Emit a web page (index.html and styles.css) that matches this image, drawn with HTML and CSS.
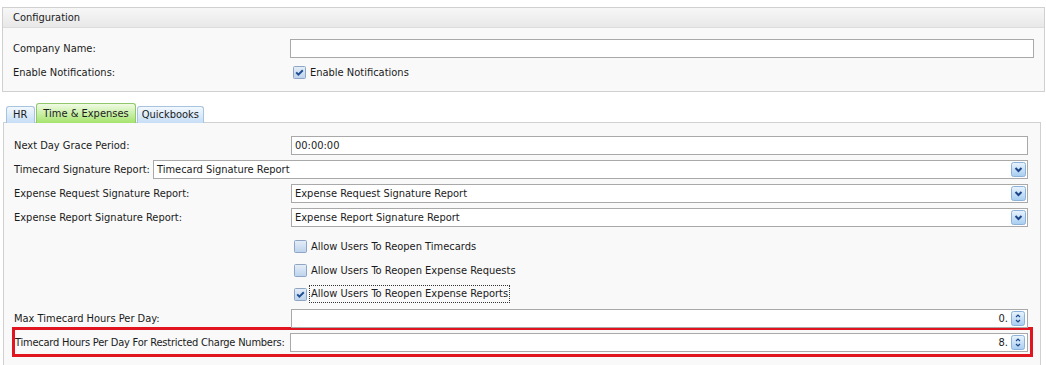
FILE: index.html
```html
<!DOCTYPE html>
<html lang="en">
<head>
    <meta charset="UTF-8">
    <title>Configuration</title>
    <link rel="stylesheet" href="styles.css">
</head>
<body>
    <div class="panel config">
        <div class="panel-header">Configuration</div>
        <div class="panel-body">
            <div class="form-row">
                <label>Company Name:</label>
                <div class="text-input"></div>
            </div>
            <div class="form-row">
                <label>Enable Notifications:</label>
                <div class="check">
                    <svg class="checkbox" width="13" height="13" viewBox="0 0 13 13">
                        <defs>
                            <linearGradient id="cbg" x1="0" y1="0" x2="0" y2="1">
                                <stop offset="0" stop-color="#e6eef8"/>
                                <stop offset="1" stop-color="#bcd2ec"/>
                            </linearGradient>
                        </defs>
                        <rect x="0.5" y="0.5" width="12" height="12" rx="1" fill="url(#cbg)" stroke="#8ea6c4"/>
                        <path d="M3.2 6.4 L5.4 8.6 L9.8 4.2" fill="none" stroke="#1f4f93" stroke-width="2"/>
                    </svg>
                    <span>Enable Notifications</span>
                </div>
            </div>
        </div>
    </div>

    <div class="tabs">
        <div class="tab hr">HR</div>
        <div class="tab active">Time &amp; Expenses</div>
        <div class="tab qb">Quickbooks</div>
    </div>

    <div class="panel tab-panel">
        <div class="form-row">
            <label>Next Day Grace Period:</label>
            <div class="text-input">00:00:00</div>
        </div>
        <div class="form-row short">
            <label>Timecard Signature Report:</label>
            <div class="text-input select">
                <span>Timecard Signature Report</span>
                <svg class="drop-btn" width="15" height="15" viewBox="0 0 15 15">
                    <defs>
                        <linearGradient id="dbg" x1="0" y1="0" x2="0" y2="1">
                            <stop offset="0" stop-color="#eaf4fd"/>
                            <stop offset="1" stop-color="#a7cdf1"/>
                        </linearGradient>
                    </defs>
                    <rect x="0.5" y="0.5" width="14" height="14" rx="2" fill="url(#dbg)" stroke="#8cb2da"/>
                    <path d="M4.5 6 L7.5 9 L10.5 6" fill="none" stroke="#1d4688" stroke-width="2"/>
                </svg>
            </div>
        </div>
        <div class="form-row">
            <label>Expense Request Signature Report:</label>
            <div class="text-input select">
                <span>Expense Request Signature Report</span>
                <svg class="drop-btn" width="15" height="15" viewBox="0 0 15 15">
                    <rect x="0.5" y="0.5" width="14" height="14" rx="2" fill="url(#dbg)" stroke="#8cb2da"/>
                    <path d="M4.5 6 L7.5 9 L10.5 6" fill="none" stroke="#1d4688" stroke-width="2"/>
                </svg>
            </div>
        </div>
        <div class="form-row">
            <label>Expense Report Signature Report:</label>
            <div class="text-input select">
                <span>Expense Report Signature Report</span>
                <svg class="drop-btn" width="15" height="15" viewBox="0 0 15 15">
                    <rect x="0.5" y="0.5" width="14" height="14" rx="2" fill="url(#dbg)" stroke="#8cb2da"/>
                    <path d="M4.5 6 L7.5 9 L10.5 6" fill="none" stroke="#1d4688" stroke-width="2"/>
                </svg>
            </div>
        </div>

        <div class="check-group">
            <div class="form-row">
                <label></label>
                <div class="check">
                    <svg class="checkbox" width="13" height="13" viewBox="0 0 13 13">
                        <rect x="0.5" y="0.5" width="12" height="12" rx="1" fill="url(#cbg)" stroke="#8ea6c4"/>
                    </svg>
                    <span>Allow Users To Reopen Timecards</span>
                </div>
            </div>
            <div class="form-row">
                <label></label>
                <div class="check">
                    <svg class="checkbox" width="13" height="13" viewBox="0 0 13 13">
                        <rect x="0.5" y="0.5" width="12" height="12" rx="1" fill="url(#cbg)" stroke="#8ea6c4"/>
                    </svg>
                    <span>Allow Users To Reopen Expense Requests</span>
                </div>
            </div>
            <div class="form-row">
                <label></label>
                <div class="check">
                    <svg class="checkbox" width="13" height="13" viewBox="0 0 13 13">
                        <rect x="0.5" y="0.5" width="12" height="12" rx="1" fill="url(#cbg)" stroke="#8ea6c4"/>
                        <path d="M3.2 6.4 L5.4 8.6 L9.8 4.2" fill="none" stroke="#1f4f93" stroke-width="2"/>
                    </svg>
                    <span class="focused">Allow Users To Reopen Expense Reports</span>
                </div>
            </div>
        </div>

        <div class="form-row">
            <label>Max Timecard Hours Per Day:</label>
            <div class="text-input number">
                <span>0.</span>
                <svg class="spin-btn" width="14" height="15" viewBox="0 0 14 15">
                    <defs>
                        <linearGradient id="sbg" x1="0" y1="0" x2="0" y2="1">
                            <stop offset="0" stop-color="#eaf4fd"/>
                            <stop offset="1" stop-color="#a7cdf1"/>
                        </linearGradient>
                    </defs>
                    <rect x="0.5" y="0.5" width="13" height="14" rx="2" fill="url(#sbg)" stroke="#8cb2da"/>
                    <path d="M5 6 L7 4 L9 6 M5 9 L7 11 L9 9" fill="none" stroke="#1d4688" stroke-width="1.2"/>
                </svg>
            </div>
        </div>
        <div class="highlight">
            <div class="form-row">
                <label>Timecard Hours Per Day For Restricted Charge Numbers:</label>
                <div class="text-input number">
                    <span>8.</span>
                    <svg class="spin-btn" width="14" height="15" viewBox="0 0 14 15">
                        <rect x="0.5" y="0.5" width="13" height="14" rx="2" fill="url(#sbg)" stroke="#8cb2da"/>
                        <path d="M5 6 L7 4 L9 6 M5 9 L7 11 L9 9" fill="none" stroke="#1d4688" stroke-width="1.2"/>
                    </svg>
                </div>
            </div>
        </div>
    </div>
</body>
</html>
```

FILE: styles.css
```css
body {
    margin: 0;
    background: #ffffff;
    font-family: "DejaVu Sans Condensed", "DejaVu Sans", Tahoma, sans-serif;
    font-stretch: condensed;
    font-size: 11px;
    color: #1b1b1b;
    height: 365px;
    overflow: hidden;
}
.panel {
    border: 1px solid #d0d0d0;
    background: #f9f9f9;
}
.config {
    margin: 7px 1px 0 2px;
}
.panel-header {
    height: 19px;
    line-height: 19px;
    padding-left: 10px;
    background: linear-gradient(#f7f7f7, #e8e8e8);
    border-bottom: 1px solid #dcdcdc;
}
.panel-body {
    padding: 8px 10px 7px 10px;
}
.form-row {
    display: grid;
    grid-template-columns: 277px 1fr;
    align-items: center;
    height: 24px;
}
.form-row label {
    white-space: nowrap;
}
.form-row.short {
    grid-template-columns: auto 1fr;
    column-gap: 3px;
}
.text-input {
    height: 17px;
    border: 1px solid #a9a9a9;
    background: #ffffff;
    display: flex;
    align-items: center;
    padding-left: 3px;
}
.select {
    justify-content: space-between;
    padding-right: 1px;
}
.number {
    justify-content: flex-end;
    padding-right: 2px;
    gap: 3px;
}
.check {
    display: flex;
    align-items: center;
    gap: 4px;
    padding-left: 3px;
}
.checkbox {
    display: block;
}
.focused {
    outline: 1px dotted #333333;
    padding: 1px 1px 2px 1px;
    margin-left: -1px;
}
.tabs {
    display: flex;
    align-items: flex-end;
    margin: 11px 0 -1px 6px;
    position: relative;
}
.tab {
    height: 16px;
    line-height: 16px;
    padding: 0 6px;
    border: 1px solid #a8c3de;
    border-bottom: none;
    border-radius: 3px 3px 0 0;
    background: linear-gradient(#f2f8fe, #c6def6);
    margin-right: 1px;
}
.tab.hr {
    padding: 0 7px 0 6px;
}
.tab.qb {
    padding: 0 4px;
}
.tab.active {
    height: 19px;
    line-height: 19px;
    padding: 0 6px;
    border-color: #8fc76a;
    background: linear-gradient(#f0fbe4, #a4e36c);
    position: relative;
    z-index: 1;
}
.tab-panel {
    box-sizing: border-box;
    margin: 0 5px 0 3px;
    padding: 10px 12px 0 10px;
    height: 244px;
    border-bottom: none;
}
.check-group {
    margin-top: 5px;
}
.highlight {
    border: 3px solid #e0151f;
    margin: -3px -5px 0 -2px;
    padding: 0 2px 0 0;
}
.highlight .form-row {
    grid-template-columns: 275px 1fr;
}
.highlight .form-row label {
    letter-spacing: -0.22px;
}
```
